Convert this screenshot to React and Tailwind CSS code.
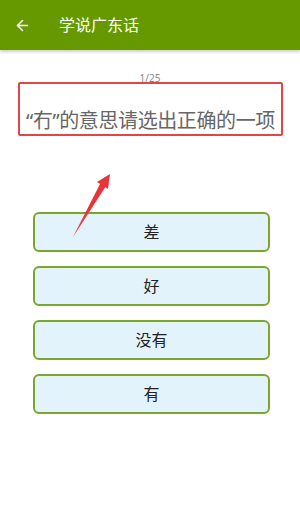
import { ArrowLeft } from "lucide-react";

const options = ["差", "好", "没有", "有"];

export default function App() {
  return (
    <div
      className="relative w-[300px] h-[523px] bg-white overflow-hidden"
      style={{ fontFamily: '"Noto Sans", "Noto Sans CJK SC", sans-serif' }}
    >
      {/* Toolbar */}
      <header className="h-[50px] bg-[#669900] flex items-center shadow-[0_2px_3px_rgba(0,0,0,0.2)] relative z-10">
        <ArrowLeft className="ml-[14px] w-[17px] h-[17px] text-white" strokeWidth={2.2} />
        <span className="ml-[28px] text-white text-[16px] leading-none">学说广东话</span>
      </header>

      {/* Question */}
      <div className="flex flex-col items-center">
        <div className="mt-[23px] text-[10px] leading-none text-[#888]">1/25</div>
        <div className="mt-[-1px] ml-[1px] w-[265px] h-[54px] border-2 border-[#e0454a] rounded-[2px] flex items-end justify-center pb-[3px]">
          <span className="text-[20px] leading-none text-[#666] whitespace-nowrap tracking-[-0.4px]">
            “冇”的意思请选出正确的一项
          </span>
        </div>
      </div>

      {/* Options */}
      <div className="mt-[76px] flex flex-col gap-[14px] px-[33px] pr-[30px]">
        {options.map((o) => (
          <button
            key={o}
            className="h-[40px] w-full rounded-[6px] border-2 border-[#7aa62c] bg-[#e2f3fb] text-[16px] text-[#222] flex items-center justify-center"
          >
            {o}
          </button>
        ))}
      </div>

      {/* Red annotation arrow */}
      <svg className="absolute left-0 top-0" width="300" height="523" viewBox="0 0 300 523">
        <path d="M73 237 L104 184 L101 182 Z" fill="#e8343a" />
        <path d="M73 237 L106 186 L103 183 Z" fill="#e8343a" />
        <polygon points="110,174 108,189 97,182" fill="#e8343a" />
      </svg>
    </div>
  );
}
